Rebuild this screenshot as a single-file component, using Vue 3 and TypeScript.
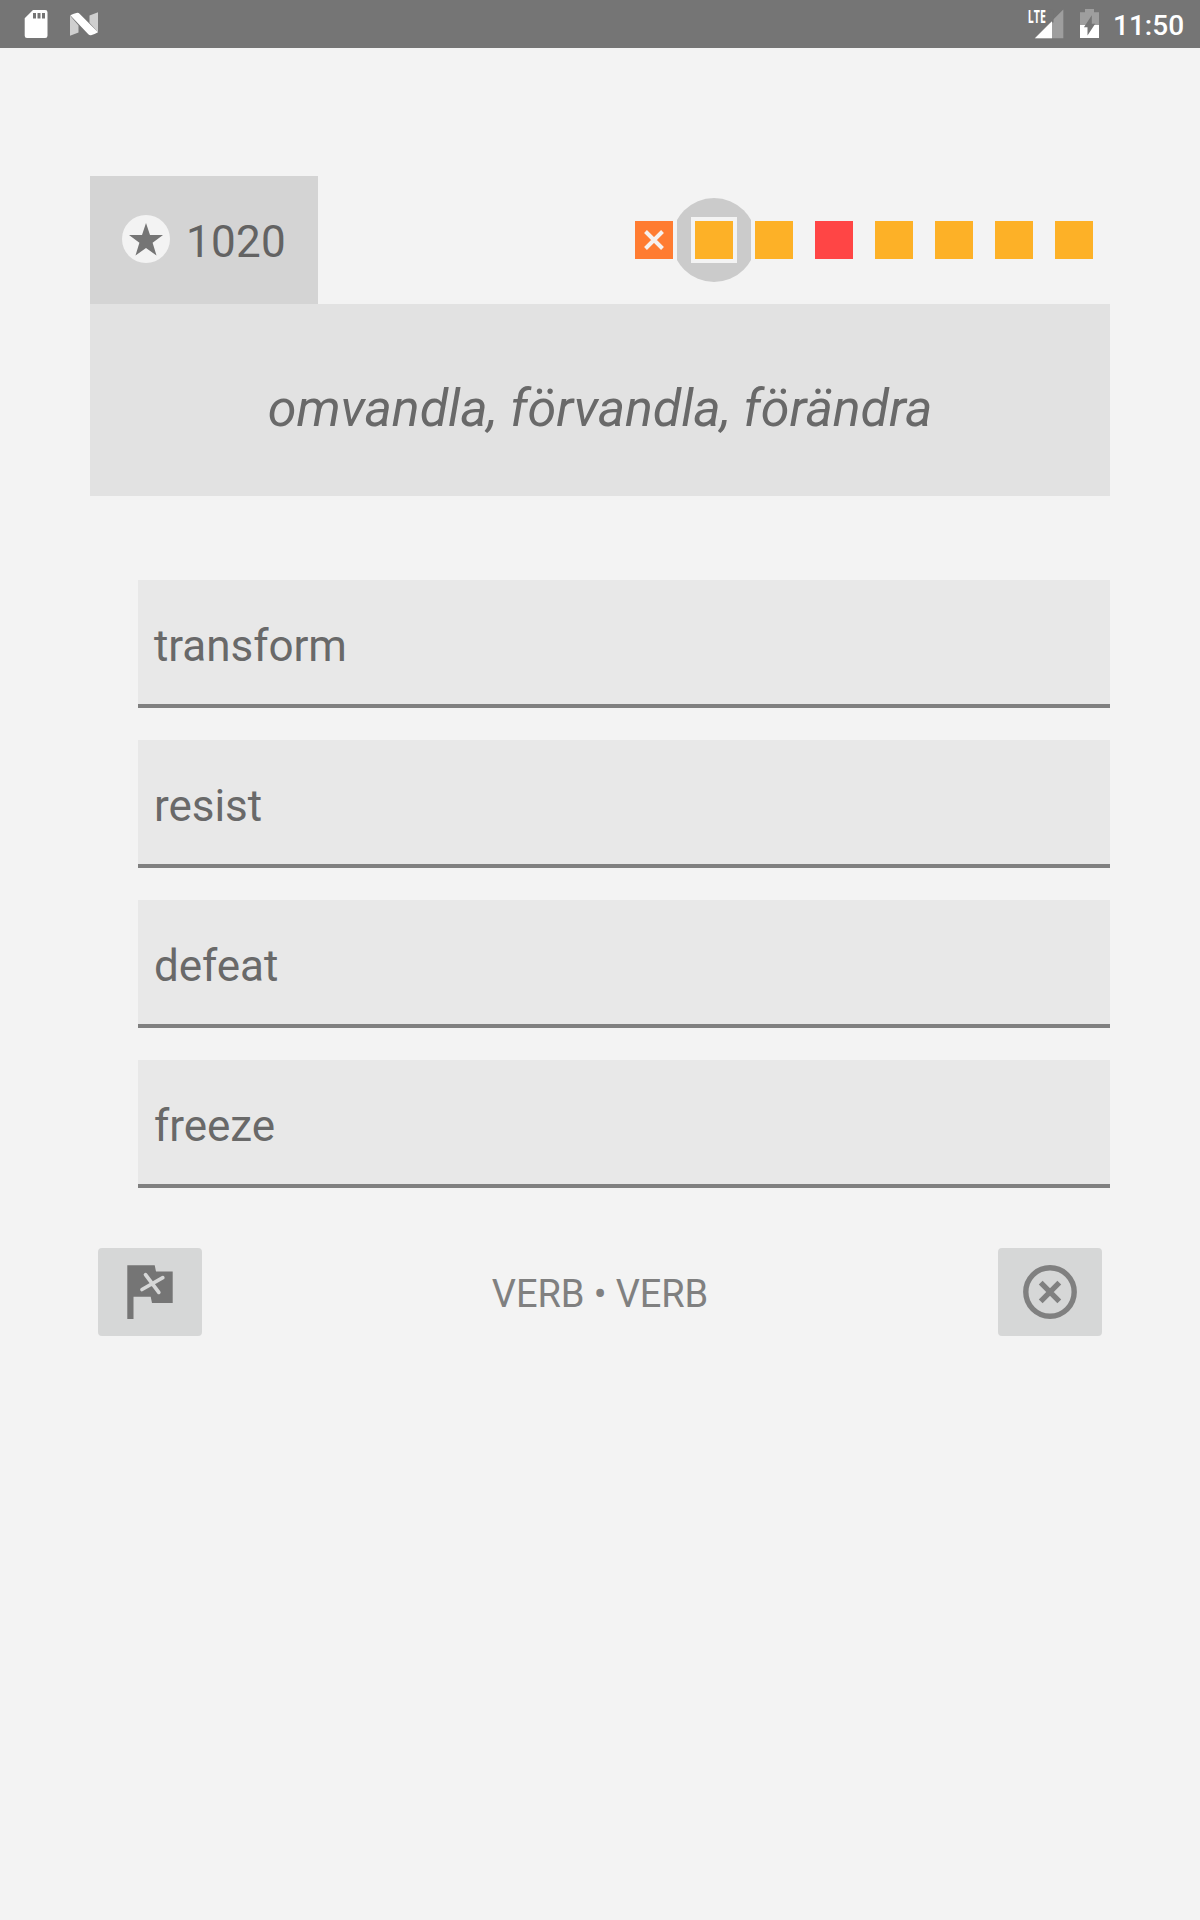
<script setup lang="ts">
type State = 'open' | 'missed' | 'hard'

interface Step {
  state: State
  current?: boolean
}

const score = 1020
const prompt = 'omvandla, förvandla, förändra'
const answers: string[] = ['transform', 'resist', 'defeat', 'freeze']
const steps: Step[] = [
  { state: 'missed' },
  { state: 'open', current: true },
  { state: 'open' },
  { state: 'hard' },
  { state: 'open' },
  { state: 'open' },
  { state: 'open' },
  { state: 'open' },
]
</script>

<template>
  <div class="screen">
    <header class="status">
      <svg class="notices" width="120" height="48" viewBox="0 0 120 48">
        <path fill="#fff" fill-rule="evenodd" d="M33 10h12.200q2.300 0 2.300 2.300v23.400q0 2.300-2.300 2.300H27q-2.300 0-2.300-2.300V18.300zM33 13v5.500h3V13zm4.500 0v5.500h3V13zm4.500 0v5.500h3V13z" />
        <path fill="#fff" fill-opacity=".65" d="M70 15.500l8.500 10v7L70 35.700zM98 12.300v20l-8.500-9.500v-7.300z" />
        <path fill="#fff" d="M70.300 15.200q3.500-2 7-2.500 1.500 0 2.500 1.200L98 32.300q-3.300 2.200-7 3-1.600.200-2.700-1z" />
      </svg>
      <div class="system">
        <svg width="90" height="48" viewBox="1020 0 90 48">
          <path fill="#fff" fill-opacity=".3" d="M1063.300 9.500V38.300H1034.500z" />
          <path fill="#757575" d="M1045.500 9.500h8v13h-8z" />
          <path fill="#fff" d="M1052 21.300v17h-17z" />
          <text x="1027.800" y="22.700" textLength="18" lengthAdjust="spacingAndGlyphs" class="lte">LTE</text>
          <path fill="#fff" fill-opacity=".3" d="M1085 9h9v3.300h5V25h-19V12.300h5z" />
          <path fill="#fff" d="M1080 25h19v13h-19z" />
          <path fill="#757575" d="M1091.800 15.200v8.500h3.400l-7.700 11.800v-8.200h-3.600z" />
        </svg>
        <span class="clock">11:50</span>
      </div>
    </header>

    <main>
      <div class="top">
        <div class="score">
          <svg width="48" height="48" viewBox="0 0 48 48">
            <circle cx="24" cy="24" r="24" fill="#f3f3f3" />
            <path fill="#757575" d="M24 8l4 12 13 .1-10.400 7.700L34.500 40.500 24 33l-10.500 7.500 3.900-12.700L7 20.100 20 20z" />
          </svg>
          <span>{{ score }}</span>
        </div>
        <div class="steps">
          <div v-for="(step, i) in steps" :key="i" class="step" :class="[step.state, { current: step.current }]">
            <svg v-if="step.current" class="halo" width="74" height="84" viewBox="0 0 74 84">
              <circle cx="37" cy="42" r="42" fill="#cbcbcb" />
              <path fill="#f3f3f3" d="M14 19h46v46H14z" />
            </svg>
            <i class="square">
              <svg v-if="step.state === 'missed'" width="38" height="38" viewBox="0 0 38 38">
                <path d="M10.500 10.500l17 17m0-17l-17 17" stroke="#f6f1ee" stroke-width="4" />
              </svg>
            </i>
          </div>
        </div>
      </div>

      <div class="prompt">{{ prompt }}</div>

      <div class="answers">
        <div v-for="word in answers" :key="word" class="answer">{{ word }}</div>
      </div>

      <footer class="actions">
        <button type="button" aria-label="Flag">
          <svg width="64" height="64" viewBox="0 0 64 64">
            <path fill="#757575" d="M9.300 5.300H36.700L38 11.500H54.700V43H34L32.700 36.700H15.500V59H9.300z" />
            <path d="M27.500 14.700l13.300 17.700M44.800 17.700L24 29.500" stroke="#d6d7d7" stroke-width="3.700" stroke-linecap="round" />
          </svg>
        </button>
        <span class="kind">VERB • VERB</span>
        <button type="button" aria-label="Skip">
          <svg width="64" height="64" viewBox="0 0 64 64" fill="none" stroke="#808080" stroke-width="5.400">
            <circle cx="32" cy="32" r="24.200" />
            <path d="M22.700 22.700l18.600 18.600m0-18.600L22.700 41.300" />
          </svg>
        </button>
      </footer>
    </main>
  </div>
</template>

<style>
body {
  background: #f3f3f3;
}
</style>

<style scoped>
.screen {
  width: 1200px;
  height: 1920px;
  overflow: hidden;
  background: #f3f3f3;
  color: #696969;
  font-family: Roboto, sans-serif;
}
svg {
  display: block;
  flex: none;
}
.status {
  display: flex;
  justify-content: space-between;
  height: 48px;
  background: #757575;
}
.system {
  display: flex;
}
.lte {
  font: 700 17px "Open Sans", sans-serif;
  fill: #fff;
}
.clock {
  width: 87px;
  margin-left: 3px;
  color: #fff;
  font-size: 28px;
  font-weight: 500;
  line-height: 51px;
}
main {
  padding: 128px 90px 0;
}
.top {
  display: flex;
  justify-content: space-between;
}
.score {
  display: flex;
  box-sizing: border-box;
  width: 228px;
  height: 128px;
  padding-left: 32px;
  background: #d4d4d4;
  color: #636363;
  font-size: 44px;
  line-height: 132px;
  letter-spacing: 0.25px;
}
.score svg {
  margin: 39px 16px 0 0;
}
.steps {
  display: flex;
  gap: 22px;
  padding: 45px 17px 0 0;
}
.step {
  position: relative;
  width: 38px;
  height: 38px;
}
.halo {
  position: absolute;
  left: -18px;
  top: -23px;
}
.square {
  position: relative;
  display: block;
  height: 38px;
  background: #fdb127;
}
.missed .square {
  background: #ff7c31;
}
.hard .square {
  background: #ff4545;
}
.prompt {
  height: 192px;
  background: #e2e2e2;
  font-size: 52px;
  font-style: italic;
  line-height: 210px;
  letter-spacing: -0.08px;
  text-align: center;
}
.answers {
  display: flex;
  flex-direction: column;
  gap: 32px;
  margin: 84px 0 0 48px;
}
.answer {
  box-sizing: border-box;
  height: 128px;
  padding-left: 16px;
  border-bottom: 4px solid #808080;
  background: #e8e8e8;
  font-size: 44px;
  line-height: 132px;
  letter-spacing: -0.05px;
}
.actions {
  display: flex;
  justify-content: space-between;
  margin: 60px 8px 0;
}
button {
  display: flex;
  align-items: center;
  justify-content: center;
  width: 104px;
  height: 88px;
  padding: 0;
  border: 0;
  border-radius: 4px;
  background: #d6d7d7;
}
.kind {
  color: #808080;
  font-size: 38px;
  line-height: 93px;
  letter-spacing: -0.1px;
}
</style>
